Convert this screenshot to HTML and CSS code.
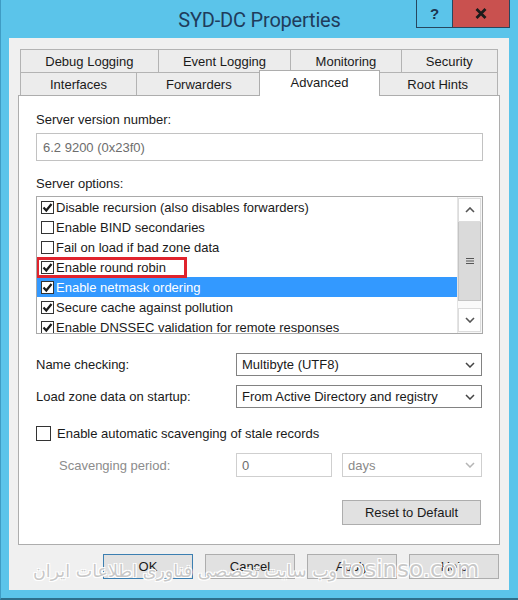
FILE: index.html
```html
<!DOCTYPE html>
<html lang="en">
<head>
    <meta charset="UTF-8">
    <title>SYD-DC Properties</title>
    <link rel="stylesheet" href="styles.css">
</head>
<body>
    <div class="window">
        <div class="titlebar">
            <div></div>
            <div class="title">SYD-DC Properties</div>
            <div class="controls">
                <span class="ctl-help">?</span>
                <span class="ctl-close">
                    <svg width="12" height="11" viewBox="0 0 12 11"><path d="M1.5 1 L10.5 10 M10.5 1 L1.5 10" stroke="#1b1b1b" stroke-width="2.8" fill="none"/></svg>
                </span>
            </div>
        </div>

        <div class="client">
            <div class="tabs">
                <div class="tab-row">
                    <div class="tab">Debug Logging</div>
                    <div class="tab">Event Logging</div>
                    <div class="tab">Monitoring</div>
                    <div class="tab">Security</div>
                </div>
                <div class="tab-row">
                    <div class="tab">Interfaces</div>
                    <div class="tab">Forwarders</div>
                    <div class="tab active">Advanced</div>
                    <div class="tab">Root Hints</div>
                </div>
            </div>

            <div class="panel">
                <div class="label first">Server version number:</div>
                <div class="textbox readonly">6.2 9200 (0x23f0)</div>

                <div class="label gap">Server options:</div>
                <div class="listbox">
                    <div class="items">
                        <div class="item"><span class="cb checked"><svg viewBox="0 0 11 11"><path d="M1.5 5.5 L4.3 8.5 L9.5 2" /></svg></span>Disable recursion (also disables forwarders)</div>
                        <div class="item"><span class="cb"></span>Enable BIND secondaries</div>
                        <div class="item"><span class="cb"></span>Fail on load if bad zone data</div>
                        <div class="item"><span class="cb checked"><svg viewBox="0 0 11 11"><path d="M1.5 5.5 L4.3 8.5 L9.5 2" /></svg></span>Enable round robin</div>
                        <div class="item selected"><span class="cb checked"><svg viewBox="0 0 11 11"><path d="M1.5 5.5 L4.3 8.5 L9.5 2" /></svg></span>Enable netmask ordering</div>
                        <div class="item"><span class="cb checked"><svg viewBox="0 0 11 11"><path d="M1.5 5.5 L4.3 8.5 L9.5 2" /></svg></span>Secure cache against pollution</div>
                        <div class="item"><span class="cb checked"><svg viewBox="0 0 11 11"><path d="M1.5 5.5 L4.3 8.5 L9.5 2" /></svg></span>Enable DNSSEC validation for remote responses</div>
                    </div>
                    <div class="scrollbar">
                        <div class="sb-btn">
                            <svg width="10" height="6" viewBox="0 0 10 6"><path d="M1 5 L5 1 L9 5" /></svg>
                        </div>
                        <div class="sb-thumb">
                            <svg width="8" height="8" viewBox="0 0 8 8"><path d="M0 1.5 H8 M0 4 H8 M0 6.5 H8" /></svg>
                        </div>
                        <div class="sb-track"></div>
                        <div class="sb-btn">
                            <svg width="10" height="6" viewBox="0 0 10 6"><path d="M1 1 L5 5 L9 1" /></svg>
                        </div>
                    </div>
                    <div class="highlight"></div>
                </div>

                <div class="field-row first-row">
                    <div class="field-label">Name checking:</div>
                    <div class="combo">
                        <span>Multibyte (UTF8)</span>
                        <svg width="10" height="6" viewBox="0 0 10 6"><path d="M1 1 L5 5 L9 1" /></svg>
                    </div>
                </div>
                <div class="field-row">
                    <div class="field-label">Load zone data on startup:</div>
                    <div class="combo">
                        <span>From Active Directory and registry</span>
                        <svg width="10" height="6" viewBox="0 0 10 6"><path d="M1 1 L5 5 L9 1" /></svg>
                    </div>
                </div>

                <div class="check-row">
                    <span class="cb big"></span>
                    Enable automatic scavenging of stale records
                </div>

                <div class="scavenge-row">
                    <div class="field-label disabled">Scavenging period:</div>
                    <div class="textbox small disabled">0</div>
                    <div class="combo disabled">
                        <span>days</span>
                        <svg width="10" height="6" viewBox="0 0 10 6"><path d="M1 1 L5 5 L9 1" /></svg>
                    </div>
                </div>

                <div class="reset-row">
                    <div class="button reset">Reset to Default</div>
                </div>
            </div>

            <div class="dialog-buttons">
                <div class="button default">OK</div>
                <div class="button">Cancel</div>
                <div class="button">Apply</div>
                <div class="button">Help</div>
            </div>

            <div class="watermark">
                <span class="wm-fa">وب سایت تخصصی فناوری اطلاعات ایران</span>
                <span class="wm-en">tosinso.com</span>
            </div>
        </div>
    </div>
</body>
</html>
```

FILE: styles.css
```css
body {
    margin: 0;
    background: #5bc4ea;
    font-family: "Liberation Sans", Arial, sans-serif;
    font-size: 13px;
    color: #1a1a1a;
}

.window {
    width: 518px;
    height: 600px;
    box-sizing: border-box;
    background: #5bc4ea;
    border-left: 1px solid #3f9cc4;
    border-bottom: 2px solid #2e6f8c;
    padding: 0 9px 0 8px;
}

/* title bar */
.titlebar {
    height: 38px;
    display: grid;
    grid-template-columns: 1fr auto 1fr;
    align-items: start;
    margin-right: -1px;
}

.title {
    font-family: Roboto, "Liberation Sans", sans-serif;
    font-size: 20px;
    color: #1f3c5c;
    padding-top: 8px;
    letter-spacing: -0.2px;
}

.controls {
    justify-self: end;
    display: flex;
    height: 27px;
    border: 1px solid #27475f;
    border-top: none;
}

.ctl-help {
    width: 35px;
    display: flex;
    align-items: center;
    justify-content: center;
    font-weight: bold;
    font-size: 15px;
    color: #1c3450;
    border-right: 1px solid #27475f;
}

.ctl-close {
    width: 56px;
    background: #c9514f;
    display: flex;
    align-items: center;
    justify-content: center;
}

/* client area */
.client {
    position: relative;
    height: 552px;
    box-sizing: border-box;
    background: #f0f0f0;
    padding: 11px 9px 0 9px;
}

.tabs {
    margin: 0 2px;
}

.tab-row {
    display: flex;
    height: 23px;
}

.tab {
    flex: 1 1 auto;
    display: flex;
    align-items: center;
    justify-content: center;
    background: #ececec;
    border: 1px solid #b3b3b3;
    border-bottom: none;
    margin-left: -1px;
    padding: 0 10px;
    white-space: nowrap;
}

.tab:first-child {
    margin-left: 0;
}

.tab.active {
    position: relative;
    z-index: 2;
    background: #fff;
    margin: -2px -2px -1px -3px;
    padding: 0 12px 3px;
    border-color: #adadad;
}

.panel {
    height: 450px;
    box-sizing: border-box;
    background: #fff;
    border: 1px solid #adadad;
    padding: 14px 16px 0 17px;
}

.label {
    line-height: 19px;
}

.label.gap {
    margin-top: 13px;
}

.textbox {
    height: 28px;
    box-sizing: border-box;
    border: 1px solid #c2c2c2;
    margin-top: 4px;
    padding: 0 6px;
    display: flex;
    align-items: center;
}

.textbox.readonly {
    color: #6d6d6d;
}

/* options list */
.listbox {
    position: relative;
    height: 138px;
    box-sizing: border-box;
    border: 1px solid #a9a9a9;
    margin-top: 3px;
    display: flex;
    overflow: hidden;
}

.items {
    flex: 1;
}

.item {
    height: 20px;
    display: flex;
    align-items: center;
    padding-left: 4px;
    white-space: nowrap;
}

.item.selected {
    background: #3399ff;
    color: #fff;
}

.cb {
    width: 13px;
    height: 13px;
    box-sizing: border-box;
    border: 1px solid #333;
    background: #fff;
    margin-right: 2px;
    display: inline-flex;
    flex-shrink: 0;
}

.cb svg {
    width: 11px;
    height: 11px;
}

.cb svg path {
    stroke: #1a1a1a;
    stroke-width: 2.2;
    fill: none;
}

.cb.big {
    width: 15px;
    height: 15px;
    margin-right: 6px;
}

.highlight {
    position: absolute;
    left: -1px;
    top: 60px;
    width: 151px;
    height: 21px;
    box-sizing: border-box;
    border: 3px solid #e0232d;
}

.scrollbar {
    width: 23px;
    display: flex;
    flex-direction: column;
    background: #f7f7f7;
    border-left: 1px solid #e4e4e4;
    padding: 1px 1px 1px 0;
}

.sb-btn {
    height: 22px;
    display: flex;
    align-items: center;
    justify-content: center;
    border: 1px solid #dcdcdc;
    background: #fff;
}

.sb-btn svg path {
    stroke: #555;
    stroke-width: 1.6;
    fill: none;
}

.sb-thumb {
    height: 78px;
    background: #dadada;
    border: 1px solid #c4c4c4;
    border-top: none;
    display: flex;
    align-items: center;
    justify-content: center;
}

.sb-thumb svg path {
    stroke: #555;
    stroke-width: 1.2;
}

.sb-track {
    flex: 1;
    background: #fafafa;
}

/* combos */
.field-row {
    display: grid;
    grid-template-columns: 200px 1fr;
    align-items: center;
    margin-top: 9px;
    margin-right: 1px;
}

.field-row.first-row {
    margin-top: 19px;
}

.combo {
    height: 23px;
    box-sizing: border-box;
    border: 1px solid #828282;
    background: #fff;
    display: flex;
    align-items: center;
    justify-content: space-between;
    padding: 0 6px 0 5px;
}

.combo svg path {
    stroke: #444;
    stroke-width: 1.5;
    fill: none;
}

.combo.disabled {
    border-color: #cfcfcf;
    color: #8a8a8a;
}

.combo.disabled svg path {
    stroke: #b5b5b5;
}

.check-row {
    display: flex;
    align-items: center;
    height: 20px;
    margin-top: 15px;
}

.scavenge-row {
    display: grid;
    grid-template-columns: 167px 96px 1fr;
    gap: 10px;
    align-items: center;
    margin: 10px 1px 0 23px;
}

.field-label.disabled {
    color: #8c8c8c;
}

.textbox.small {
    margin-top: 0;
    height: 24px;
    padding: 0 5px;
}

.textbox.disabled {
    border-color: #cfcfcf;
    color: #6d6d6d;
}

.scavenge-row .combo {
    height: 24px;
}

.reset-row {
    display: flex;
    justify-content: flex-end;
    margin: 23px 2px 0 0;
}

/* buttons */
.button {
    height: 25px;
    box-sizing: border-box;
    border: 1px solid #adadad;
    background: #e1e1e1;
    display: flex;
    align-items: center;
    justify-content: center;
}

.button.reset {
    width: 139px;
}

.button.default {
    border-color: #3c7fb1;
}

.dialog-buttons {
    display: flex;
    justify-content: flex-end;
    gap: 12px;
    margin: 9px 1px 0 0;
}

.dialog-buttons .button {
    width: 90px;
}

/* overlay watermark */
.watermark {
    position: absolute;
    left: 24px;
    bottom: 8px;
    display: flex;
    align-items: baseline;
    gap: 4px;
    color: rgba(190, 190, 190, 0.85);
    text-shadow: 1px 1px 0 #fff, -1px -1px 0 #fff, 1px -1px 0 #fff, -1px 1px 0 #fff;
    pointer-events: none;
    white-space: nowrap;
}

.wm-fa {
    font-family: "DejaVu Sans", sans-serif;
    font-size: 17.5px;
}

.wm-en {
    font-family: "DejaVu Sans", sans-serif;
    font-size: 23px;
}
```
